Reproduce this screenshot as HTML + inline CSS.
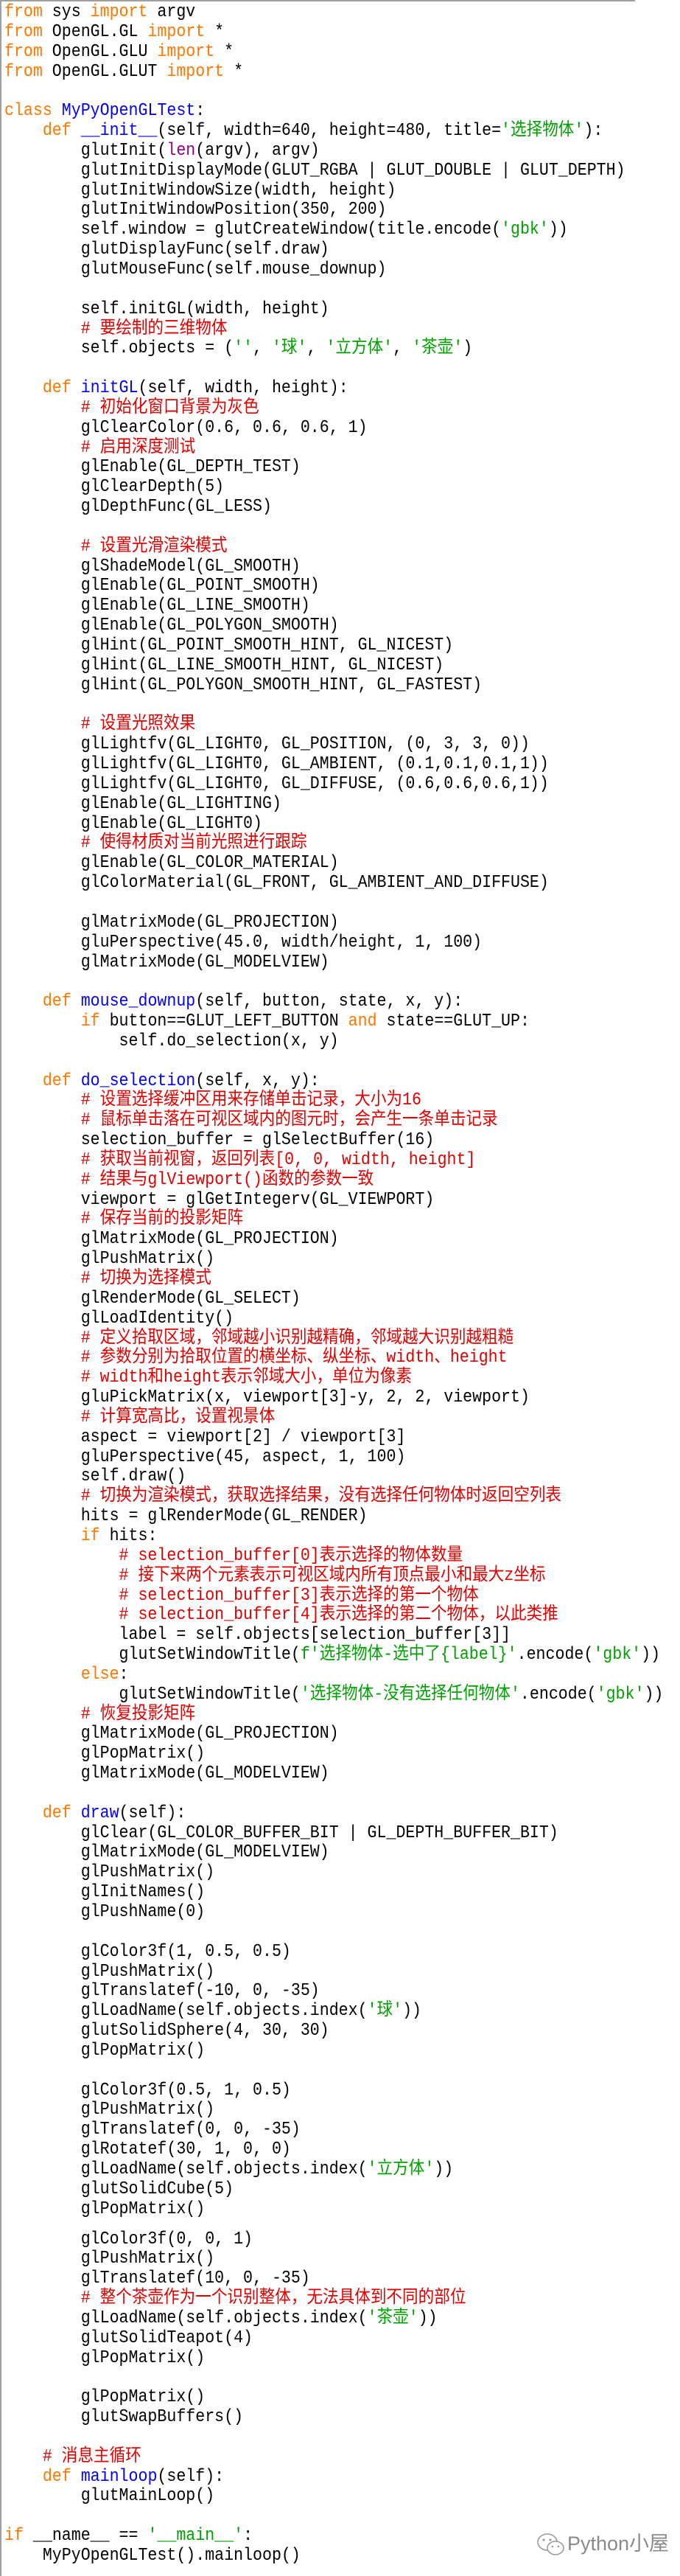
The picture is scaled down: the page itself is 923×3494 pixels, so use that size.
<!DOCTYPE html>
<html><head><meta charset="utf-8">
<style>
html,body{margin:0;padding:0;background:#fff;}
body{width:923px;height:3494px;position:relative;overflow:hidden;}
.bl{position:absolute;left:0;top:0;width:2px;height:3494px;background:#a0a0a0;}
.bt{position:absolute;left:0;top:0;width:862px;height:2px;background:#a0a0a0;}
.code{position:absolute;left:6px;top:4px;width:1020px;transform:scaleX(0.9);transform-origin:0 0;
 font-family:"Liberation Mono","Noto Sans CJK SC",monospace;font-size:24px;line-height:26.85px;color:#000;}
.code div{white-space:pre;height:26.85px;}
.k{color:#ff7700}.f{color:#0000ff}.s{color:#00a000}.c{color:#e00000}.b{color:#900090}
.wm{position:absolute;left:728px;top:3428px;font-family:"Liberation Sans","Noto Sans CJK SC",sans-serif;font-size:27px;color:#8a8a8a;}
</style></head><body>
<div class="bl"></div><div class="bt"></div>
<div class="code">
<div><span class="k">from</span> sys <span class="k">import</span> argv</div>
<div><span class="k">from</span> OpenGL.GL <span class="k">import</span> *</div>
<div><span class="k">from</span> OpenGL.GLU <span class="k">import</span> *</div>
<div><span class="k">from</span> OpenGL.GLUT <span class="k">import</span> *</div>
<div> </div>
<div><span class="k">class</span> <span class="f">MyPyOpenGLTest</span>:</div>
<div>    <span class="k">def</span> <span class="f">__init__</span>(self, width=640, height=480, title=<span class="s">'选择物体'</span>):</div>
<div>        glutInit(<span class="b">len</span>(argv), argv)</div>
<div>        glutInitDisplayMode(GLUT_RGBA | GLUT_DOUBLE | GLUT_DEPTH)</div>
<div>        glutInitWindowSize(width, height)</div>
<div>        glutInitWindowPosition(350, 200)</div>
<div>        self.window = glutCreateWindow(title.encode(<span class="s">'gbk'</span>))</div>
<div>        glutDisplayFunc(self.draw)</div>
<div>        glutMouseFunc(self.mouse_downup)</div>
<div> </div>
<div>        self.initGL(width, height)</div>
<div>        <span class="c"># 要绘制的三维物体</span></div>
<div>        self.objects = (<span class="s">''</span>, <span class="s">'球'</span>, <span class="s">'立方体'</span>, <span class="s">'茶壶'</span>)</div>
<div> </div>
<div>    <span class="k">def</span> <span class="f">initGL</span>(self, width, height):</div>
<div>        <span class="c"># 初始化窗口背景为灰色</span></div>
<div>        glClearColor(0.6, 0.6, 0.6, 1)</div>
<div>        <span class="c"># 启用深度测试</span></div>
<div>        glEnable(GL_DEPTH_TEST)</div>
<div>        glClearDepth(5)</div>
<div>        glDepthFunc(GL_LESS)</div>
<div> </div>
<div>        <span class="c"># 设置光滑渲染模式</span></div>
<div>        glShadeModel(GL_SMOOTH)</div>
<div>        glEnable(GL_POINT_SMOOTH)</div>
<div>        glEnable(GL_LINE_SMOOTH)</div>
<div>        glEnable(GL_POLYGON_SMOOTH)</div>
<div>        glHint(GL_POINT_SMOOTH_HINT, GL_NICEST)</div>
<div>        glHint(GL_LINE_SMOOTH_HINT, GL_NICEST)</div>
<div>        glHint(GL_POLYGON_SMOOTH_HINT, GL_FASTEST)</div>
<div> </div>
<div>        <span class="c"># 设置光照效果</span></div>
<div>        glLightfv(GL_LIGHT0, GL_POSITION, (0, 3, 3, 0))</div>
<div>        glLightfv(GL_LIGHT0, GL_AMBIENT, (0.1,0.1,0.1,1))</div>
<div>        glLightfv(GL_LIGHT0, GL_DIFFUSE, (0.6,0.6,0.6,1))</div>
<div>        glEnable(GL_LIGHTING)</div>
<div>        glEnable(GL_LIGHT0)</div>
<div>        <span class="c"># 使得材质对当前光照进行跟踪</span></div>
<div>        glEnable(GL_COLOR_MATERIAL)</div>
<div>        glColorMaterial(GL_FRONT, GL_AMBIENT_AND_DIFFUSE)</div>
<div> </div>
<div>        glMatrixMode(GL_PROJECTION)</div>
<div>        gluPerspective(45.0, width/height, 1, 100)</div>
<div>        glMatrixMode(GL_MODELVIEW)</div>
<div> </div>
<div>    <span class="k">def</span> <span class="f">mouse_downup</span>(self, button, state, x, y):</div>
<div>        <span class="k">if</span> button==GLUT_LEFT_BUTTON <span class="k">and</span> state==GLUT_UP:</div>
<div>            self.do_selection(x, y)</div>
<div> </div>
<div>    <span class="k">def</span> <span class="f">do_selection</span>(self, x, y):</div>
<div>        <span class="c"># 设置选择缓冲区用来存储单击记录，大小为16</span></div>
<div>        <span class="c"># 鼠标单击落在可视区域内的图元时，会产生一条单击记录</span></div>
<div>        selection_buffer = glSelectBuffer(16)</div>
<div>        <span class="c"># 获取当前视窗，返回列表[0, 0, width, height]</span></div>
<div>        <span class="c"># 结果与glViewport()函数的参数一致</span></div>
<div>        viewport = glGetIntegerv(GL_VIEWPORT)</div>
<div>        <span class="c"># 保存当前的投影矩阵</span></div>
<div>        glMatrixMode(GL_PROJECTION)</div>
<div>        glPushMatrix()</div>
<div>        <span class="c"># 切换为选择模式</span></div>
<div>        glRenderMode(GL_SELECT)</div>
<div>        glLoadIdentity()</div>
<div>        <span class="c"># 定义拾取区域，邻域越小识别越精确，邻域越大识别越粗糙</span></div>
<div>        <span class="c"># 参数分别为拾取位置的横坐标、纵坐标、width、height</span></div>
<div>        <span class="c"># width和height表示邻域大小，单位为像素</span></div>
<div>        gluPickMatrix(x, viewport[3]-y, 2, 2, viewport)</div>
<div>        <span class="c"># 计算宽高比，设置视景体</span></div>
<div>        aspect = viewport[2] / viewport[3]</div>
<div>        gluPerspective(45, aspect, 1, 100)</div>
<div>        self.draw()</div>
<div>        <span class="c"># 切换为渲染模式，获取选择结果，没有选择任何物体时返回空列表</span></div>
<div>        hits = glRenderMode(GL_RENDER)</div>
<div>        <span class="k">if</span> hits:</div>
<div>            <span class="c"># selection_buffer[0]表示选择的物体数量</span></div>
<div>            <span class="c"># 接下来两个元素表示可视区域内所有顶点最小和最大z坐标</span></div>
<div>            <span class="c"># selection_buffer[3]表示选择的第一个物体</span></div>
<div>            <span class="c"># selection_buffer[4]表示选择的第二个物体，以此类推</span></div>
<div>            label = self.objects[selection_buffer[3]]</div>
<div>            glutSetWindowTitle(<span class="s">f'选择物体-选中了{label}'</span>.encode(<span class="s">'gbk'</span>))</div>
<div>        <span class="k">else</span>:</div>
<div>            glutSetWindowTitle(<span class="s">'选择物体-没有选择任何物体'</span>.encode(<span class="s">'gbk'</span>))</div>
<div>        <span class="c"># 恢复投影矩阵</span></div>
<div>        glMatrixMode(GL_PROJECTION)</div>
<div>        glPopMatrix()</div>
<div>        glMatrixMode(GL_MODELVIEW)</div>
<div> </div>
<div>    <span class="k">def</span> <span class="f">draw</span>(self):</div>
<div>        glClear(GL_COLOR_BUFFER_BIT | GL_DEPTH_BUFFER_BIT)</div>
<div>        glMatrixMode(GL_MODELVIEW)</div>
<div>        glPushMatrix()</div>
<div>        glInitNames()</div>
<div>        glPushName(0)</div>
<div> </div>
<div>        glColor3f(1, 0.5, 0.5)</div>
<div>        glPushMatrix()</div>
<div>        glTranslatef(-10, 0, -35)</div>
<div>        glLoadName(self.objects.index(<span class="s">'球'</span>))</div>
<div>        glutSolidSphere(4, 30, 30)</div>
<div>        glPopMatrix()</div>
<div> </div>
<div>        glColor3f(0.5, 1, 0.5)</div>
<div>        glPushMatrix()</div>
<div>        glTranslatef(0, 0, -35)</div>
<div>        glRotatef(30, 1, 0, 0)</div>
<div>        glLoadName(self.objects.index(<span class="s">'立方体'</span>))</div>
<div>        glutSolidCube(5)</div>
<div>        glPopMatrix()</div>
<div style="margin-top:14px">        glColor3f(0, 0, 1)</div>
<div>        glPushMatrix()</div>
<div>        glTranslatef(10, 0, -35)</div>
<div>        <span class="c"># 整个茶壶作为一个识别整体，无法具体到不同的部位</span></div>
<div>        glLoadName(self.objects.index(<span class="s">'茶壶'</span>))</div>
<div>        glutSolidTeapot(4)</div>
<div>        glPopMatrix()</div>
<div> </div>
<div>        glPopMatrix()</div>
<div>        glutSwapBuffers()</div>
<div> </div>
<div>    <span class="c"># 消息主循环</span></div>
<div>    <span class="k">def</span> <span class="f">mainloop</span>(self):</div>
<div>        glutMainLoop()</div>
<div> </div>
<div><span class="k">if</span> __name__ == <span class="s">'__main__'</span>:</div>
<div>    MyPyOpenGLTest().mainloop()</div>
</div>
<div class="wm"><svg width="40" height="36" viewBox="0 0 40 36" style="vertical-align:middle;margin-right:2px"><ellipse cx="15" cy="14" rx="13" ry="11" fill="none" stroke="#9a9a9a" stroke-width="1.6"/><ellipse cx="26" cy="22" rx="11" ry="9" fill="#fff" stroke="#9a9a9a" stroke-width="1.6"/><circle cx="10" cy="11" r="1.6" fill="#9a9a9a"/><circle cx="19" cy="11" r="1.6" fill="#9a9a9a"/><circle cx="22" cy="20" r="1.3" fill="#9a9a9a"/><circle cx="30" cy="20" r="1.3" fill="#9a9a9a"/></svg>Python小屋</div>
</body></html>
